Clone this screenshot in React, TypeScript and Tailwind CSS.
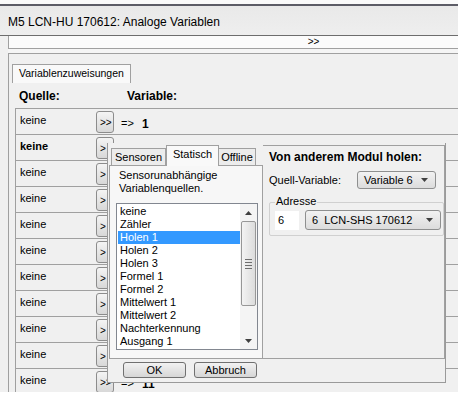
import React from 'react';

const rows = ['1', '2', '3', '4', '5', '6', '7', '8', '9', '10', '11'];

const listItems = [
  'keine',
  'Zähler',
  'Holen 1',
  'Holen 2',
  'Holen 3',
  'Formel 1',
  'Formel 2',
  'Mittelwert 1',
  'Mittelwert 2',
  'Nachterkennung',
  'Ausgang 1',
];

function Arrow({ down }: { down?: boolean }) {
  return (
    <svg width="7" height="4" viewBox="0 0 7 4">
      {down ? <path d="M0 0h7L3.5 4z" fill="#404040" /> : <path d="M0 4h7L3.5 0z" fill="#404040" />}
    </svg>
  );
}

function Combo({ label, className }: { label: string; className: string }) {
  return (
    <div
      className={`flex items-center justify-between border border-[#8e8f8f] rounded-[3px] bg-gradient-to-b from-[#f2f2f2] to-[#dcdcdc] pl-[6px] pr-[7px] text-[11px] ${className}`}
    >
      <span>{label}</span>
      <Arrow down />
    </div>
  );
}

function Row({ n, index }: { n: string; index: number }) {
  return (
    <div className="flex h-[26px] border-t border-[#a0a0a0] shrink-0">
      <div className={`w-[81px] border-l border-[#a0a0a0] pl-[4px] pt-[3px] text-[11px] ${index === 1 ? 'font-bold' : ''}`}>
        keine
      </div>
      <div className="mt-[2px] w-[18px] h-[22px] border border-[#8c8c8c] rounded-[3px] bg-gradient-to-b from-[#f4f4f4] to-[#d8d8d8] flex items-end pl-[3px] pb-[4px] text-[10px] leading-none">
        {index === 0 || index === 10 ? '>>' : '>'}
      </div>
      <div className="flex items-start pt-[6px] pl-[7px] text-[11px]">
        <span className="w-[21px]">=&gt;</span>
        <span className="font-bold text-[12px]">{n}</span>
      </div>
    </div>
  );
}

export default function App() {
  return (
    <div className="relative w-[473px] h-[401px] bg-white overflow-hidden font-['Liberation_Sans',Arial,sans-serif] text-black">
      <div className="w-[458px] h-[392px] flex flex-col bg-[#f0f0f0]">
        {/* title */}
        <div className="h-[4px] bg-[#fafafa] shrink-0" />
        <div className="h-[2px] bg-[#5c5c66] shrink-0" />
        <div className="h-[29px] bg-gradient-to-b from-[#e9e9e9] to-[#eeeeee] pl-[8px] pt-[7px] text-[12px] shrink-0">
          M5 LCN-HU 170612: Analoge Variablen
        </div>
        <div className="h-[1px] bg-[#6d6d6d] shrink-0" />
        <div className="flex h-[12px] shrink-0">
          <div className="w-[8px] bg-[#f0f0f0]" />
          <div className="flex-1 bg-[#fbfbfb] border-l border-[#a0a0a0] flex justify-center pl-[160px] text-[10px] leading-[12px]">
            &gt;&gt;
          </div>
        </div>
        <div className="h-[6px] border-y border-[#a0a0a0] bg-[#f5f5f5] ml-[8px] shrink-0" />

        {/* body */}
        <div className="flex-1 flex flex-col ml-[8px] border-l border-[#a0a0a0] min-h-0">
          <div className="flex pt-[10px] pl-[3px] shrink-0">
            <div className="h-[19px] border border-b-0 border-[#a0a0a0] bg-[#f9f9f9] px-[6px] flex items-center text-[10.5px]">
              Variablenzuweisungen
            </div>
          </div>
          <div className="flex h-[25px] items-center text-[12px] font-bold shrink-0">
            <span className="pl-[10px] w-[118px]">Quelle:</span>
            <span>Variable:</span>
          </div>
          <div className="flex-1 flex flex-col ml-[6px] overflow-hidden">
            {rows.map((n, i) => (
              <Row key={n} n={n} index={i} />
            ))}
          </div>
        </div>
      </div>

      {/* popup */}
      <div className="absolute left-[107px] top-[143px] w-[339px] h-[240px] bg-[#f0f0f0] border-l border-r border-b border-[#9a9a9a] text-[11px]">
        <div className="flex h-[214px] mt-[2px]">
          {/* tab control */}
          <div className="w-[155px] ml-[1px] flex flex-col">
            <div className="flex items-end h-[20px] pl-[2px] relative z-10">
              <div className="h-[17px] w-[55px] border border-b-0 border-[#a0a0a0] bg-[#ececec] flex items-center justify-center">
                Sensoren
              </div>
              <div className="h-[21px] w-[53px] border border-b-0 border-[#a0a0a0] bg-[#f9f9f9] flex items-center justify-center -mb-[1px] pb-[3px]">
                Statisch
              </div>
              <div className="h-[17px] w-[37px] border border-b-0 border-l-0 border-[#a0a0a0] bg-[#ececec] flex items-center justify-center">
                Offline
              </div>
            </div>
            <div className="flex-1 border border-[#a0a0a0] bg-[#f7f7f7] pl-[6px] pt-[3px]">
              <div className="leading-[13px] pl-[3px]">
                Sensorunabhängige
                <br />
                Variablenquellen.
              </div>
              <div className="mt-[8px] w-[142px] h-[147px] border border-[#828790] bg-white flex">
                <div className="flex-1 pt-[1px] pl-[1px]">
                  {listItems.map((it) => (
                    <div
                      key={it}
                      className={`h-[13px] leading-[13px] pl-[2px] ${it === 'Holen 1' ? 'bg-[#3399ff] text-white' : ''}`}
                    >
                      {it}
                    </div>
                  ))}
                </div>
                <div className="w-[17px] flex flex-col items-center bg-[#f4f4f4]">
                  <div className="h-[17px] flex items-center justify-center">
                    <Arrow />
                  </div>
                  <div className="w-[15px] h-[85px] border border-[#979797] rounded-[2px] bg-gradient-to-r from-[#f3f3f3] to-[#dcdcdc] flex flex-col items-center justify-center gap-[2px]">
                    <div className="w-[7px] h-[1px] bg-[#6d6d6d]" />
                    <div className="w-[7px] h-[1px] bg-[#6d6d6d]" />
                    <div className="w-[7px] h-[1px] bg-[#6d6d6d]" />
                    <div className="w-[7px] h-[1px] bg-[#6d6d6d]" />
                  </div>
                  <div className="flex-1" />
                  <div className="h-[17px] flex items-center justify-center">
                    <Arrow down />
                  </div>
                </div>
              </div>
            </div>
          </div>

          {/* right group */}
          <div className="w-[182px] border-y border-r border-[#a0a0a0] pl-[6px] pt-[4px]">
            <div className="font-bold text-[12px] leading-[14px]">Von anderem Modul holen:</div>
            <div className="flex items-center mt-[7px] h-[18px]">
              <span className="w-[88px]">Quell-Variable:</span>
              <Combo label="Variable 6" className="w-[79px] h-[18px]" />
            </div>
            <div className="relative mt-[13px] w-[175px] h-[34px] border border-[#d0d0d0] rounded-[2px]">
              <span className="absolute -top-[8px] left-[5px] bg-[#f0f0f0] px-[1px] leading-[13px]">Adresse</span>
              <div className="flex items-center mt-[7px] pl-[5px] gap-[6px]">
                <div className="w-[24px] h-[19px] bg-white pl-[3px] leading-[19px]">6</div>
                <Combo label="6  LCN-SHS 170612" className="w-[136px] h-[20px] whitespace-pre" />
              </div>
            </div>
          </div>
        </div>

        {/* buttons */}
        <div className="flex gap-[8px] pl-[15px] mt-[3px]">
          <div className="w-[63px] h-[16px] border border-[#707070] rounded-[3px] bg-gradient-to-b from-[#f2f2f2] to-[#d6d6d6] flex items-center justify-center">
            OK
          </div>
          <div className="w-[63px] h-[16px] border border-[#707070] rounded-[3px] bg-gradient-to-b from-[#f2f2f2] to-[#d6d6d6] flex items-center justify-center">
            Abbruch
          </div>
        </div>
      </div>
    </div>
  );
}
